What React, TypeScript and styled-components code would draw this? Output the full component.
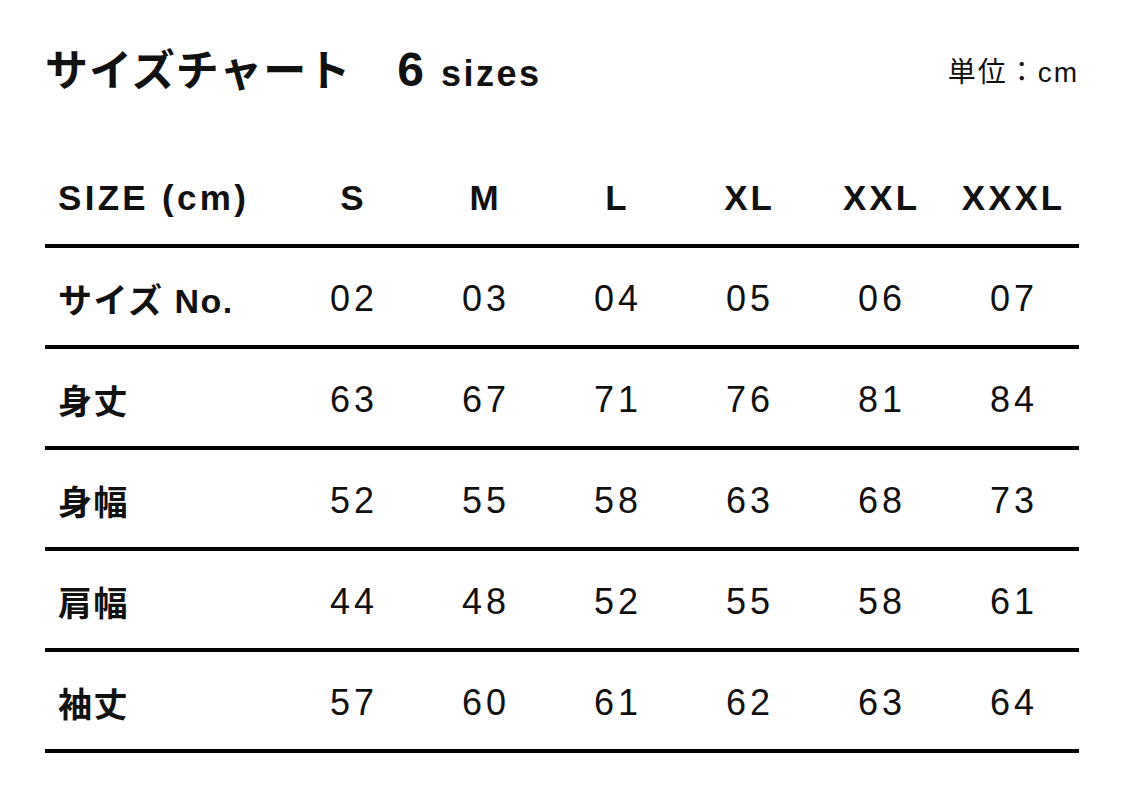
import React from "react";
import styled, { createGlobalStyle } from "styled-components";

const GlobalStyle = createGlobalStyle`
  html, body {
    margin: 0;
    padding: 0;
    background: #fff;
  }
  body {
    font-family: "Liberation Sans", "Noto Sans CJK JP", sans-serif;
    color: #111;
  }
`;

const sizes = ["S", "M", "L", "XL", "XXL", "XXXL"];

const rows: { label: string; values: string[] }[] = [
  { label: "サイズ No.", values: ["02", "03", "04", "05", "06", "07"] },
  { label: "身丈", values: ["63", "67", "71", "76", "81", "84"] },
  { label: "身幅", values: ["52", "55", "58", "63", "68", "73"] },
  { label: "肩幅", values: ["44", "48", "52", "55", "58", "61"] },
  { label: "袖丈", values: ["57", "60", "61", "62", "63", "64"] },
];

const Page = styled.div`
  width: 1125px;
  height: 787px;
  padding: 0 46px 0 45px;
  box-sizing: border-box;
  overflow: hidden;
`;

const TitleBar = styled.header`
  display: flex;
  justify-content: space-between;
  align-items: center;
  height: 52px;
  margin-top: 44px;
`;

const Title = styled.h1`
  margin: 0;
  display: flex;
  align-items: baseline;
  font-weight: 700;
  font-size: 43px;
  letter-spacing: 1px;
  line-height: 1;
  font-family: "Noto Sans CJK JP", sans-serif;
`;

const Count = styled.span`
  margin-left: 46px;
  font-family: "Liberation Sans", sans-serif;
  font-size: 48px;
  font-weight: 700;
  letter-spacing: 0;
  span {
    font-size: 36px;
    letter-spacing: 2.5px;
    margin-left: 17px;
  }
`;

const Unit = styled.div`
  font-size: 28px;
  letter-spacing: 2px;
  font-family: "Liberation Sans", "Noto Sans CJK JP", sans-serif;
`;

const Table = styled.div`
  margin-top: 51px;
`;

const Row = styled.div`
  display: grid;
  grid-template-columns: 241px repeat(6, 132px);
  align-items: center;
  height: 101px;
  box-sizing: border-box;
  border-bottom: 4px solid #000;
`;

const Label = styled.div`
  padding-left: 13px;
  padding-top: 4px;
  font-size: 34px;
  font-weight: 700;
  letter-spacing: 1.5px;
  font-family: "Liberation Sans", "Noto Sans CJK JP", sans-serif;
`;

const HeadLabel = styled(Label)`
  font-size: 35px;
  letter-spacing: 3.3px;
`;

const Cell = styled.div<{ $head?: boolean }>`
  text-align: center;
  padding-top: 4px;
  font-size: ${(p) => (p.$head ? "35px" : "36px")};
  font-weight: ${(p) => (p.$head ? 700 : 400)};
  letter-spacing: ${(p) => (p.$head ? "3px" : "4px")};
  padding-left: ${(p) => (p.$head ? "3px" : "4px")};
`;

export default function App() {
  return (
    <Page>
      <GlobalStyle />
      <TitleBar>
        <Title>
          サイズチャート
          <Count>
            6<span>sizes</span>
          </Count>
        </Title>
        <Unit>単位：cm</Unit>
      </TitleBar>
      <Table>
        <Row>
          <HeadLabel>SIZE (cm)</HeadLabel>
          {sizes.map((s) => (
            <Cell $head key={s}>
              {s}
            </Cell>
          ))}
        </Row>
        {rows.map((r) => (
          <Row key={r.label}>
            <Label>{r.label}</Label>
            {r.values.map((v, i) => (
              <Cell key={i}>{v}</Cell>
            ))}
          </Row>
        ))}
      </Table>
    </Page>
  );
}
